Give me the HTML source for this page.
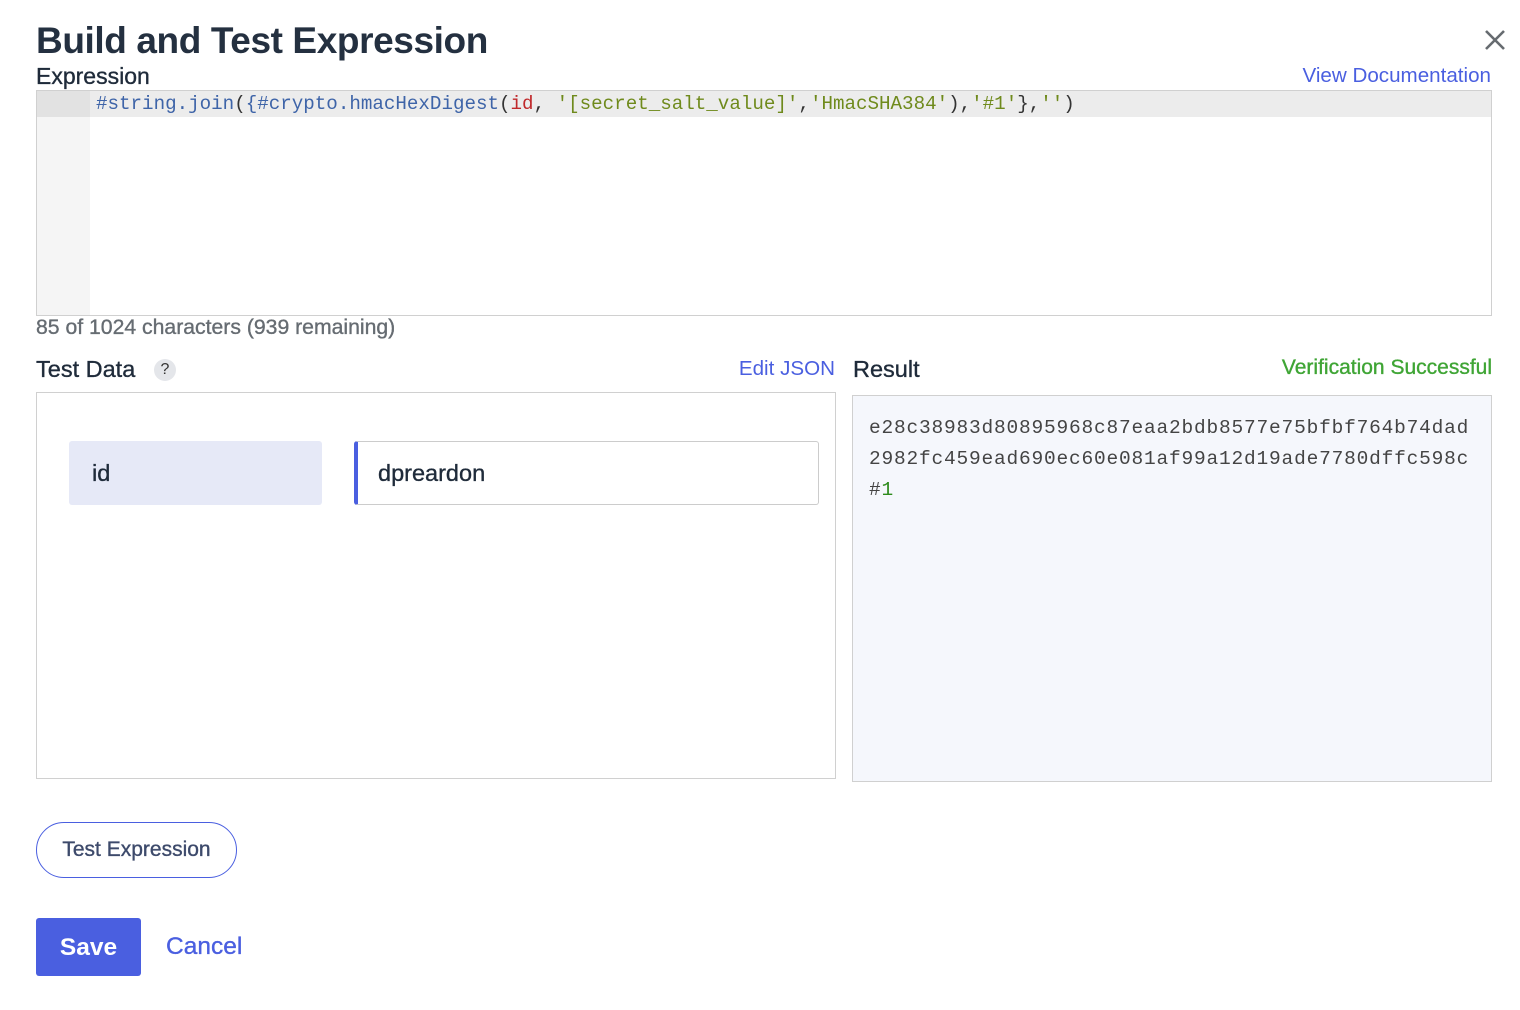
<!DOCTYPE html>
<html><head><meta charset="utf-8"><style>
*{margin:0;padding:0;box-sizing:border-box}
body{width:1520px;height:1010px;background:#fff;font-family:"Liberation Sans",Arial,sans-serif;color:#1f2b3a;position:relative;overflow:hidden}
.a{position:absolute;white-space:nowrap}
.mono{font-family:"Liberation Mono",monospace}
.m{-webkit-text-stroke:0.35px currentColor}
</style></head><body>
<div class="a" style="left:36px;top:20px;font-size:37px;font-weight:bold;color:#243040;letter-spacing:-0.4px">Build and Test Expression</div>
<svg class="a" style="left:1484px;top:29px" width="22" height="22" viewBox="0 0 22 22"><path d="M2 2L20 20M20 2L2 20" stroke="#666b70" stroke-width="2.6"/></svg>
<div class="a m" style="left:36px;top:63px;font-size:23px;color:#1f2b3a">Expression</div>
<div class="a" style="right:29px;top:64px;font-size:20.6px;color:#4a5fe0">View Documentation</div>
<div class="a" style="left:36px;top:90px;width:1456px;height:226px;border:1px solid #d0d0d0;background:#fff"></div>
<div class="a" style="left:37px;top:91px;width:53px;height:224px;background:#f5f5f5"></div>
<div class="a" style="left:37px;top:91px;width:1454px;height:26px;background:#ececec"></div>
<div class="a" style="left:37px;top:91px;width:53px;height:26px;background:#e2e2e2"></div>
<div class="a mono" style="left:96px;top:91px;font-size:19.2px;line-height:26px;color:#333"><span style="color:#3e64a8">#string.join</span>(<span style="color:#3e64a8">{#crypto.hmacHexDigest</span>(<span style="color:#c0292b">id</span>, <span style="color:#6f8a1c">'[secret_salt_value]'</span>,<span style="color:#6f8a1c">'HmacSHA384'</span>),<span style="color:#6f8a1c">'#1'</span>},<span style="color:#6f8a1c">''</span>)</div>
<div class="a m" style="left:36px;top:316px;font-size:21.2px;color:#666c72">85 of 1024 characters (939 remaining)</div>
<div class="a m" style="left:36px;top:356px;font-size:23.5px;color:#1f2b3a">Test Data</div>
<div class="a" style="left:154px;top:359px;width:22px;height:22px;border-radius:50%;background:#e4e6ea;font-size:16px;text-align:center;line-height:22px;color:#333">?</div>
<div class="a" style="right:685px;top:357px;font-size:20.6px;color:#4a5fe0">Edit JSON</div>
<div class="a m" style="left:853px;top:356px;font-size:23.5px;color:#1f2b3a">Result</div>
<div class="a m" style="right:28px;top:356px;font-size:21px;color:#3fa535">Verification Successful</div>
<div class="a" style="left:36px;top:392px;width:800px;height:387px;border:1px solid #d0d0d0"></div>
<div class="a m" style="left:69px;top:441px;width:253px;height:64px;background:#e6e9f7;border-radius:3px;font-size:23.5px;line-height:64px;padding-left:23px;color:#1f2b3a">id</div>
<div class="a m" style="left:354px;top:441px;width:465px;height:64px;border:1px solid #ccc;border-left:4px solid #4a5fe0;border-radius:3px;font-size:23.5px;line-height:62px;padding-left:20px;color:#1f2b3a">dpreardon</div>
<div class="a" style="left:852px;top:395px;width:640px;height:387px;border:1px solid #d0d0d0;background:#f5f7fc"></div>
<div class="a mono" style="left:869px;top:413px;font-size:19.5px;line-height:31px;color:#444;letter-spacing:0.8px">e28c38983d80895968c87eaa2bdb8577e75bfbf764b74dad<br>2982fc459ead690ec60e081af99a12d19ade7780dffc598c<br>#<span style="color:#2e8b1c">1</span></div>
<div class="a m" style="left:36px;top:822px;width:201px;height:56px;border:1.5px solid #4a5fe0;border-radius:28px;font-size:21px;line-height:54px;text-align:center;color:#3d4a6b">Test Expression</div>
<div class="a" style="left:36px;top:918px;width:105px;height:58px;background:#4a5fe0;border-radius:3px;font-size:24.5px;font-weight:bold;line-height:60px;text-align:center;color:#fff">Save</div>
<div class="a m" style="left:166px;top:933px;font-size:24.5px;color:#4a5fe0">Cancel</div>
</body></html>
